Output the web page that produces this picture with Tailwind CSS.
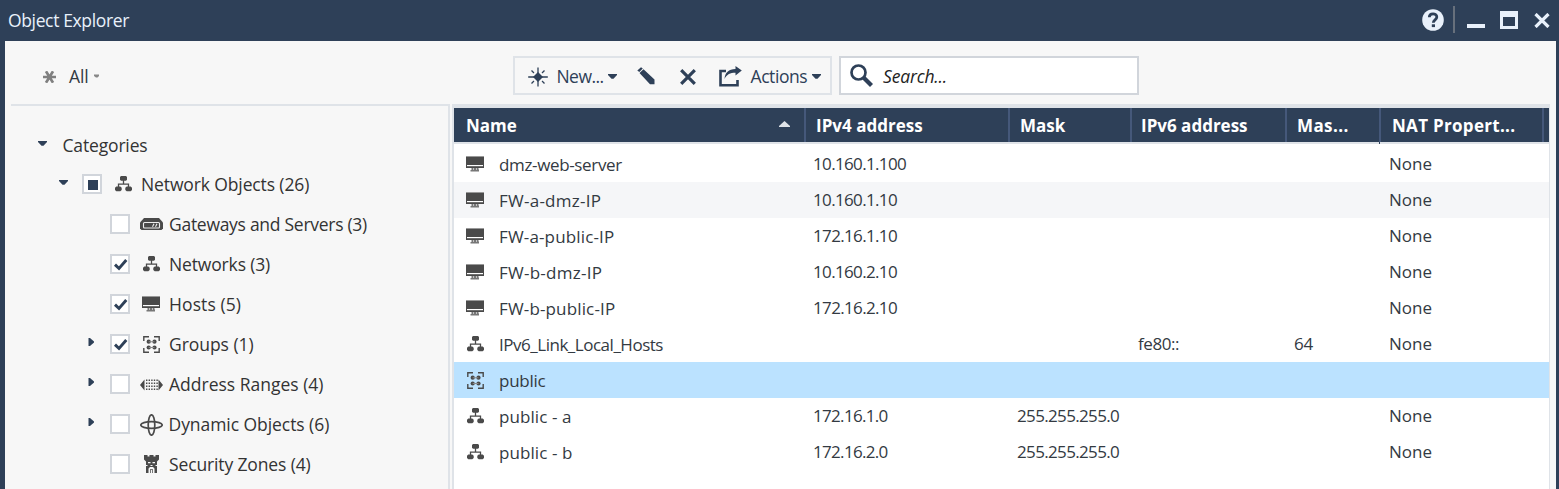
<!DOCTYPE html>
<html lang="en"><head><meta charset="utf-8"><title>Object Explorer</title>
<script src="https://cdn.jsdelivr.net/npm/@tailwindcss/browser@4"></script></head>
<body class="flex h-[489px] w-[1559px] flex-col overflow-hidden bg-[#2e4058] font-['Open_Sans','Noto_Sans',sans-serif] text-[17.5px] whitespace-nowrap text-[#333a42]">
<svg class="hidden">
<symbol id="net" viewBox="0 0 17 16"><path d="M6 0h5l1 1v2.800l-1 1H6l-1-1V1zM1.300 10.500h4l1.400 1.300v2.200l-1.400 1.300h-4L0 14v-2.200zM11.700 10.500h4l1.300 1.300v2.200l-1.300 1.300h-4L10.300 14v-2.200z" fill="#4a4a4a"/><path d="M8.500 4v4M3.500 11V8.200h10V11" fill="none" stroke="#4a4a4a" stroke-width="1.300"/></symbol>
<symbol id="host" viewBox="0 0 18 16"><path d="M0 0h18v12H0z" fill="#4a4a4a"/><path d="M0 0h18v1H0z" fill="#999"/><path d="M1 9h16v1.200H1z" fill="#fff"/><path d="M5.500 12h7v1.500h.5v2H4.500v-1.500h1z" fill="#777"/><path d="M7 12.200h1v1.500H7zM10 12.200h1v1.500h-1z" fill="#ddd"/></symbol>
<symbol id="group" viewBox="0 0 17 17"><path d="M.8 5V.8H6M11 .8h5.200V5M16.200 12v4.200H11M6 16.200H.8V12" fill="none" stroke="#4a4a4a" stroke-width="1.400"/><g fill="#4a4a4a"><circle cx="5.700" cy="5.700" r="2.100"/><circle cx="11.500" cy="5.700" r="2.100"/><circle cx="5.700" cy="11.500" r="2.100"/><circle cx="11.500" cy="11.500" r="2.100"/></g><path d="M5.700 5.200h5.800v1H5.700zM5.700 11h5.800v1H5.700z" fill="#888"/></symbol>
<symbol id="check" viewBox="0 0 16 16"><path d="M3 8.600l4 3.900 7.300-8.500" fill="none" stroke="#2e4058" stroke-width="2.900"/></symbol>
<symbol id="down" viewBox="0 0 9 5"><path d="M0 0h9v1L5.500 4.800h-2L0 1z" fill="#2e4058"/></symbol>
<symbol id="right" viewBox="0 0 6 8"><path d="M.5 0h1.500L6 3.500v1L2 8H.5z" fill="#2e4058"/></symbol>
</svg>

<header class="flex h-[41px] shrink-0 items-center pl-[8px] text-[#e9f1fb]">
  <span class="w-[1414px] tracking-[-.36px]">Object Explorer</span>
  <svg class="-mt-px h-[22px] w-[22px]" viewBox="0 0 22 22"><circle cx="11" cy="11" r="10.800" fill="#e9f1fb"/><path d="M7.300 8.300C7.300 3.700 14.800 3.800 14.800 8c0 2.900-3.500 2.800-3.500 5.800" fill="none" stroke="#2e4058" stroke-width="2.800"/><path d="M9.800 15.300h3.200v2.800H9.800z" fill="#2e4058"/></svg>
  <span class="-mt-[2px] ml-[9px] h-[27px] w-[2px] bg-[#67707c]"></span>
  <span class="mt-[11px] ml-[12px] h-[4px] w-[18px] bg-[#e9f1fb]"></span>
  <span class="-mt-px ml-[15px] h-[18px] w-[18px] border-x-[3px] border-t-[6px] border-b-[3px] border-[#e9f1fb]"></span>
  <svg class="-mt-px ml-[16px] h-[15px] w-[16px]" viewBox="0 0 16 15"><path d="M1.500 1l13 13M14.500 1l-13 13" stroke="#e9f1fb" stroke-width="3.200"/></svg>
</header>

<main class="ml-[5px] flex h-[448px] w-[1551px] flex-col bg-[#f7f7f7]">
  <div class="flex h-[63px] shrink-0 items-start">
    <div class="ml-[37.500px] flex h-[70px] w-[470.500px] items-center">
      <svg class="mt-[2px] h-[12px] w-[13px]" viewBox="0 0 13 12"><path d="M0 6h13M3 .300l7 11.400M10 .300L3 11.700" stroke="#808080" stroke-width="2.700"/></svg>
      <span class="ml-[13.500px] tracking-[-.1px]">All</span>
      <svg class="ml-[5px] h-[4px] w-[5px]" viewBox="0 0 5 4"><path d="M0 .500h5v1.500L3.500 3.500h-1.500L0 2z" fill="#888"/></svg>
    </div>
    <div class="mt-[15px] flex h-[39px] w-[319px] items-center border-2 border-[#dfe3e8] text-[#2e4058]">
      <svg class="mt-[3px] ml-[13px] h-[20px] w-[20px]" viewBox="0 0 20 20"><path d="M10 .500v19M.200 10h19.600" stroke="#2e4058" stroke-width="1.300"/><path d="M3.500 3.500l13 13M16.500 3.500l-13 13" stroke="#2e4058" stroke-width="1.300" stroke-dasharray="3.500 11.400 3.500"/><path d="M10 5l5 5-5 5-5-5z" fill="#2e4058"/></svg>
      <span class="mt-px ml-[8.500px] w-[51.500px] tracking-[-.56px]">New...</span>
      <svg class="mt-[2px] h-[5px] w-[9px]"><use href="#down"/></svg>
      <svg class="ml-[20px] h-[18px] w-[18px]" viewBox="0 0 18 18"><path d="M.300 3.500L4 .200l1.800 1.400-3.500 3.500zM2.500 6l4-3.800L17.500 12.500v4.800h-4.500z" fill="#2e4058"/></svg>
      <svg class="mt-[2px] ml-[25px] h-[16px] w-[16px]" viewBox="0 0 16 16"><path d="M1.200 1.200l13.600 13.600M14.800 1.200L1.200 14.800" stroke="#2e4058" stroke-width="3.200"/></svg>
      <svg class="mt-px ml-[23px] h-[21px] w-[23px]" viewBox="0 0 23 21"><path d="M7 5H1.500v14.300h17V14" fill="none" stroke="#2e4058" stroke-width="2.600"/><path d="M5.500 13C6 6.500 9.500 3.200 16.500 3V0l6.300 4.600L16.500 9.500V6.800C11 6.800 8 8.300 5.500 13z" fill="#2e4058"/></svg>
      <span class="mt-px ml-[8.500px] w-[61px] tracking-[-.42px]">Actions</span>
      <svg class="mt-[2px] h-[5px] w-[9px]"><use href="#down"/></svg>
    </div>
    <div class="mt-[15px] ml-[7px] flex h-[39px] w-[300px] items-center border-2 border-[#d1d5db] bg-white">
      <svg class="ml-[9px] h-[23px] w-[23px]" viewBox="0 0 23 23"><circle cx="8.500" cy="8.500" r="7" fill="none" stroke="#2e4058" stroke-width="2.700"/><path d="M13.500 13.500l8 8" stroke="#2e4058" stroke-width="4.200"/></svg>
      <span class="mt-px ml-[10px] tracking-[-.17px] italic text-[#222]">Search...</span>
    </div>
  </div>

  <div class="flex h-[385px]">
    <nav class="ml-[6px] w-[439px] border-t-2 border-r-2 border-[#dfe3e8] pt-[19px] text-[#333]">
      <div class="flex h-[40px] items-center pl-[27px]"><svg class="-mt-[3px] h-[5px] w-[9px]"><use href="#down"/></svg><span class="ml-[15.500px] tracking-[-.16px]">Categories</span></div>
      <div class="-mt-px flex h-[40px] items-center pl-[48px]"><svg class="-mt-[3px] h-[5px] w-[9px]"><use href="#down"/></svg><span class="ml-[14px] flex h-[20px] w-[20px] items-center justify-center border-2 border-[#d1d5db] bg-white"><i class="ml-px mt-px h-[10px] w-[10px] bg-[#2e4058]"></i></span><svg class="ml-[13px] h-[16px] w-[17px]"><use href="#net"/></svg><span class="ml-[9px] tracking-[-.12px]">Network Objects (26)</span></div>
      <div class="flex h-[40px] items-center pl-[99px]"><span class="h-[20px] w-[20px] border-2 border-[#d1d5db] bg-white"></span><span class="ml-[9px] flex w-[25px] justify-center"><svg class="h-[12px] w-[23px]" viewBox="0 0 23 12"><path d="M4 0h15l4 4.500v6L21.500 12h-20L0 10.500v-6z" fill="#4a4a4a"/><rect x="3.500" y="4.500" width="16" height="5.500" rx="1" fill="#4a4a4a" stroke="#eee" stroke-width="1.100"/><path d="M12.500 8.800l1.500-3M15.500 8.800l1.500-3" stroke="#eee" stroke-width="1.100"/></svg></span><span class="ml-[5px] tracking-[-.28px]">Gateways and Servers (3)</span></div>
      <div class="flex h-[40px] items-center pl-[99px]"><span class="h-[20px] w-[20px] border-2 border-[#d1d5db] bg-white"><svg class="h-[16px] w-[16px]"><use href="#check"/></svg></span><span class="ml-[9px] flex w-[25px] justify-center"><svg class="h-[16px] w-[17px]"><use href="#net"/></svg></span><span class="ml-[5px] tracking-[-.15px]">Networks (3)</span></div>
      <div class="flex h-[40px] items-center pl-[99px]"><span class="h-[20px] w-[20px] border-2 border-[#d1d5db] bg-white"><svg class="h-[16px] w-[16px]"><use href="#check"/></svg></span><span class="ml-[9px] flex w-[25px] justify-center"><svg class="-ml-px h-[16px] w-[18px]"><use href="#host"/></svg></span><span class="ml-[5px] tracking-[.1px]">Hosts (5)</span></div>
      <div class="flex h-[40px] items-center pl-[77px]"><svg class="-mt-[4px] mr-[16px] h-[8px] w-[6px]"><use href="#right"/></svg><span class="h-[20px] w-[20px] border-2 border-[#d1d5db] bg-white"><svg class="h-[16px] w-[16px]"><use href="#check"/></svg></span><span class="ml-[9px] flex w-[25px] justify-center"><svg class="h-[17px] w-[17px]"><use href="#group"/></svg></span><span class="ml-[5px] tracking-[-.05px]">Groups (1)</span></div>
      <div class="flex h-[40px] items-center pl-[77px]"><svg class="-mt-[4px] mr-[16px] h-[8px] w-[6px]"><use href="#right"/></svg><span class="h-[20px] w-[20px] border-2 border-[#d1d5db] bg-white"></span><span class="ml-[9px] flex w-[25px] justify-center"><svg class="mt-[2px] h-[12px] w-[23px]" viewBox="0 0 23 12"><path d="M4.500 .500v11L0 6zM18.500 .500v11L23 6z" fill="#4a4a4a"/><path d="M6 1.300h12M6 4.300h12M6 7.300h12M6 10.300h12" stroke="#4a4a4a" stroke-width="1.400" stroke-dasharray="1.400 1.200"/></svg></span><span class="ml-[5px]">Address Ranges (4)</span></div>
      <div class="flex h-[40px] items-center pl-[77px]"><svg class="-mt-[4px] mr-[16px] h-[8px] w-[6px]"><use href="#right"/></svg><span class="h-[20px] w-[20px] border-2 border-[#d1d5db] bg-white"></span><span class="ml-[9px] flex w-[25px] justify-center"><svg class="mt-px h-[22px] w-[23px]" viewBox="0 0 23 22"><g fill="none" stroke="#4a4a4a" stroke-width="1.700"><ellipse cx="11.500" cy="11" rx="10.700" ry="3.300"/><ellipse cx="11.500" cy="11" rx="3.300" ry="10.200"/></g></svg></span><span class="ml-[4.500px] tracking-[-.06px]">Dynamic Objects (6)</span></div>
      <div class="flex h-[40px] items-center pl-[99px]"><span class="h-[20px] w-[20px] border-2 border-[#d1d5db] bg-white"></span><span class="ml-[9px] flex w-[25px] justify-center"><svg class="-ml-px h-[18px] w-[15px]" viewBox="0 0 15 18"><path d="M0 0h3.500v1.500h2V0h4v1.500h2V0H15v4.500L13 6.500V18h-2.500v-4.500L9 12H6l-1.500 1.500V18H2V6.500L0 4.500z" fill="#4a4a4a"/><path d="M4 7h2.500v1.300H4zM8.500 7H11v1.300H8.500zM6.500 10h2v1h-2zM2 10h1.500v1H2zM11.500 10H13v1h-1.500z" fill="#f7f7f7"/><path d="M6 14h3v4H8v-3H7v3H6z" fill="#777"/></svg></span><span class="ml-[5px] tracking-[-.13px]">Security Zones (4)</span></div>
    </nav>

    <section class="relative ml-[2px] w-[1098px] border-t-4 border-r border-l-2 border-[#dfe3e8] bg-white text-[17px]">
      <div class="flex h-[36px] items-center border-b-2 border-[#dfe3e8] bg-[#2e4058] font-bold text-white *:flex *:h-full *:items-center *:border-r-2 *:border-[#45587a] *:pt-px *:pl-[10px]">
        <div class="w-[352px] pr-[14px] pl-[12px]!"><span class="flex-1">Name</span><svg class="-mt-[4px] h-[6px] w-[11px]" viewBox="0 0 11 6"><path d="M5.500 0L11 5v1H0V5z" fill="#dfe3e8"/></svg></div>
        <div class="w-[204px] tracking-[.02px]">IPv4 address</div>
        <div class="w-[122px]">Mask</div>
        <div class="w-[155px] pl-[9px]!">IPv6 address</div>
        <div class="w-[94px] tracking-[.4px]">Mas...</div>
        <div class="w-[163px] pl-[11px]! tracking-[.3px]">NAT Propert...</div>
      </div>
      <div class="absolute top-[34px] left-[925px] h-[2px] w-px bg-[#2e4058]"></div>
      <div class="pt-[2px] *:grid *:h-[36px] *:grid-cols-[33px_315px_204px_121px_156px_95px_1fr] *:items-center *:pl-[12px]">
        <div><svg class="h-[16px] w-[18px]"><use href="#host"/></svg><span class="pt-px tracking-[-.35px]">dmz-web-server</span><span class="-ml-px tracking-[-.65px]">10.160.1.100</span><span></span><span></span><span></span><span class="-ml-px">None</span></div>
        <div class="bg-[#f5f6f8]"><svg class="h-[16px] w-[18px]"><use href="#host"/></svg><span class="pt-px tracking-[.25px]">FW-a-dmz-IP</span><span class="-ml-px tracking-[-.65px]">10.160.1.10</span><span></span><span></span><span></span><span class="-ml-px">None</span></div>
        <div><svg class="h-[16px] w-[18px]"><use href="#host"/></svg><span class="pt-px tracking-[.15px]">FW-a-public-IP</span><span class="-ml-px tracking-[-.65px]">172.16.1.10</span><span></span><span></span><span></span><span class="-ml-px">None</span></div>
        <div><svg class="h-[16px] w-[18px]"><use href="#host"/></svg><span class="pt-px tracking-[.25px]">FW-b-dmz-IP</span><span class="-ml-px tracking-[-.65px]">10.160.2.10</span><span></span><span></span><span></span><span class="-ml-px">None</span></div>
        <div><svg class="h-[16px] w-[18px]"><use href="#host"/></svg><span class="pt-px tracking-[.15px]">FW-b-public-IP</span><span class="-ml-px tracking-[-.65px]">172.16.2.10</span><span></span><span></span><span></span><span class="-ml-px">None</span></div>
        <div><svg class="ml-px h-[16px] w-[17px]"><use href="#net"/></svg><span class="pt-px tracking-[-.48px]">IPv6_Link_Local_Hosts</span><span></span><span></span><span class="-ml-px tracking-[-.44px]">fe80::</span><span class="-ml-px tracking-[-.23px]">64</span><span class="-ml-px">None</span></div>
        <div class="bg-[#bbe2ff]"><svg class="ml-px h-[17px] w-[17px]"><use href="#group"/></svg><span class="pt-px tracking-[-.25px]">public</span></div>
        <div><svg class="ml-px h-[16px] w-[17px]"><use href="#net"/></svg><span class="pt-px tracking-[.08px]">public - a</span><span class="-ml-px tracking-[-.68px]">172.16.1.0</span><span class="-ml-px tracking-[-.65px]">255.255.255.0</span><span></span><span></span><span class="-ml-px">None</span></div>
        <div><svg class="ml-px h-[16px] w-[17px]"><use href="#net"/></svg><span class="pt-px tracking-[.08px]">public - b</span><span class="-ml-px tracking-[-.68px]">172.16.2.0</span><span class="-ml-px tracking-[-.65px]">255.255.255.0</span><span></span><span></span><span class="-ml-px">None</span></div>
      </div>
    </section>
  </div>
</main>
</body></html>
